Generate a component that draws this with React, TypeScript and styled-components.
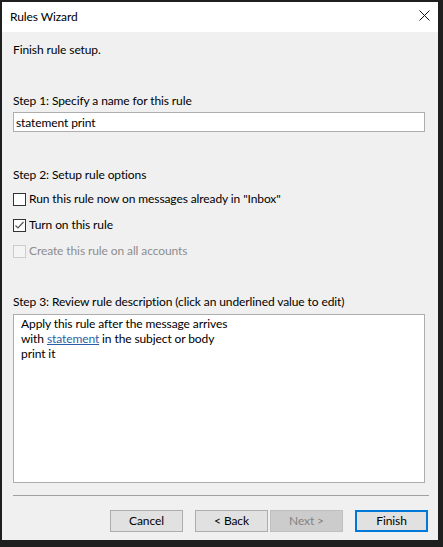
import React from "react";
import styled, {createGlobalStyle} from "styled-components";

const GlobalStyle = createGlobalStyle`
  html, body {
    margin: 0;
    padding: 0;
    background: #1f1f1f;
  }
  body {
    font-family: Lato, "Noto Sans", sans-serif;
    font-size: 12px;
    letter-spacing: -0.1px;
  }
`;

export default function App() {
    return (
        <Page>
            <GlobalStyle />
            <Dialog>
                <TitleBar>
                    <Title>Rules Wizard</Title>
                    <CloseButton>
                        <svg width="11" height="11" viewBox="0 0 11 11">
                            <path d="M0.5 0.5 L10.5 10.5 M10.5 0.5 L0.5 10.5" stroke="#111" strokeWidth="1" fill="none" />
                        </svg>
                    </CloseButton>
                </TitleBar>
                <Body>
                    <Intro>Finish rule setup.</Intro>

                    <Label $top={35}>Step 1: Specify a name for this rule</Label>
                    <NameInput defaultValue="statement print" />

                    <Label $top={35}>Step 2: Setup rule options</Label>
                    <Options>
                        <Option>
                            <Box />
                            Run this rule now on messages already in "Inbox"
                        </Option>
                        <Option>
                            <Box>
                                <svg width="11" height="11" viewBox="0 0 11 11">
                                    <path d="M1.5 5.5 L4 8 L9.5 2" stroke="#555" strokeWidth="1.2" fill="none" />
                                </svg>
                            </Box>
                            Turn on this rule
                        </Option>
                        <Option $disabled>
                            <Box $disabled />
                            Create this rule on all accounts
                        </Option>
                    </Options>

                    <Label $top={35}>Step 3: Review rule description (click an underlined value to edit)</Label>
                    <Description>
                        <Line>Apply this rule after the message arrives</Line>
                        <Line>with <RuleLink>statement</RuleLink> in the subject or body</Line>
                        <Line>print it</Line>
                    </Description>

                    <Separator />

                    <Buttons>
                        <Button>Cancel</Button>
                        <Button $gap={12}>&lt; Back</Button>
                        <Button $gap={2} disabled>Next &gt;</Button>
                        <Button $gap={12} $primary>Finish</Button>
                    </Buttons>
                </Body>
            </Dialog>
        </Page>
    );
}

const Page = styled.div`
  width: 443px;
  height: 547px;
  padding: 2px 0 0 2px;
  box-sizing: border-box;
`;

const Dialog = styled.div`
  width: 436px;
  height: 538px;
  background: #f0f0f0;
  display: flex;
  flex-direction: column;
`;

const TitleBar = styled.div`
  height: 30px;
  background: #ffffff;
  display: flex;
  align-items: center;
  justify-content: space-between;
  padding: 0 7px 0 8px;
`;

const Title = styled.div`
  color: #000;
  font-size: 12px;
  margin-top: -1px;
`;

const CloseButton = styled.div`
  width: 11px;
  height: 11px;
  margin-top: -3px;
  margin-right: 1px;
  display: flex;
`;

const Body = styled.div`
  flex: 1;
  display: flex;
  flex-direction: column;
  padding: 10px 10px 0 11px;
  color: #000;
  line-height: 16px;
`;

const Intro = styled.div``;

const Label = styled.div<{$top: number}>`
  margin-top: ${p => p.$top}px;
`;

const NameInput = styled.input`
  margin-top: 3px;
  width: 412px;
  height: 20px;
  box-sizing: border-box;
  border: 1px solid #adadad;
  background: #fff;
  font: inherit;
  font-size: 12px;
  letter-spacing: inherit;
  padding: 0 2px;
  outline: none;
  color: #000;
`;

const Options = styled.div`
  margin-top: 8px;
  display: flex;
  flex-direction: column;
  gap: 10px;
`;

const Option = styled.div<{$disabled?: boolean}>`
  display: flex;
  align-items: center;
  gap: 3px;
  height: 16px;
  color: ${p => p.$disabled ? "#8d8d8d" : "#000"};
`;

const Box = styled.div<{$disabled?: boolean}>`
  width: 13px;
  height: 13px;
  box-sizing: border-box;
  border: 1px solid ${p => p.$disabled ? "#cccccc" : "#333333"};
  background: ${p => p.$disabled ? "#f4f4f4" : "#ffffff"};
  display: flex;
  align-items: center;
  justify-content: center;
`;

const Description = styled.div`
  margin-top: 4px;
  width: 412px;
  height: 169px;
  box-sizing: border-box;
  border: 1px solid #adadad;
  background: #fff;
  padding: 1px 7px;
`;

const Line = styled.div`
  height: 15px;
  line-height: 15px;
`;

const RuleLink = styled.span`
  color: #2c5fa8;
  text-decoration: underline;
`;

const Separator = styled.div`
  margin-top: 12px;
  width: 416px;
  height: 1px;
  background: #a0a0a0;
`;

const Buttons = styled.div`
  margin-top: 14px;
  display: flex;
  justify-content: flex-end;
`;

const Button = styled.button<{$gap?: number; $primary?: boolean}>`
  margin-left: ${p => p.$gap ?? 0}px;
  width: 73px;
  height: 22px;
  box-sizing: border-box;
  font: inherit;
  font-size: 12px;
  letter-spacing: inherit;
  padding: 0;
  background: #e1e1e1;
  color: #000;
  border: ${p => p.$primary ? "2px solid #0078d7" : "1px solid #adadad"};
  &:disabled {
    background: #cccccc;
    border-color: #bfbfbf;
    color: #838383;
  }
`;
